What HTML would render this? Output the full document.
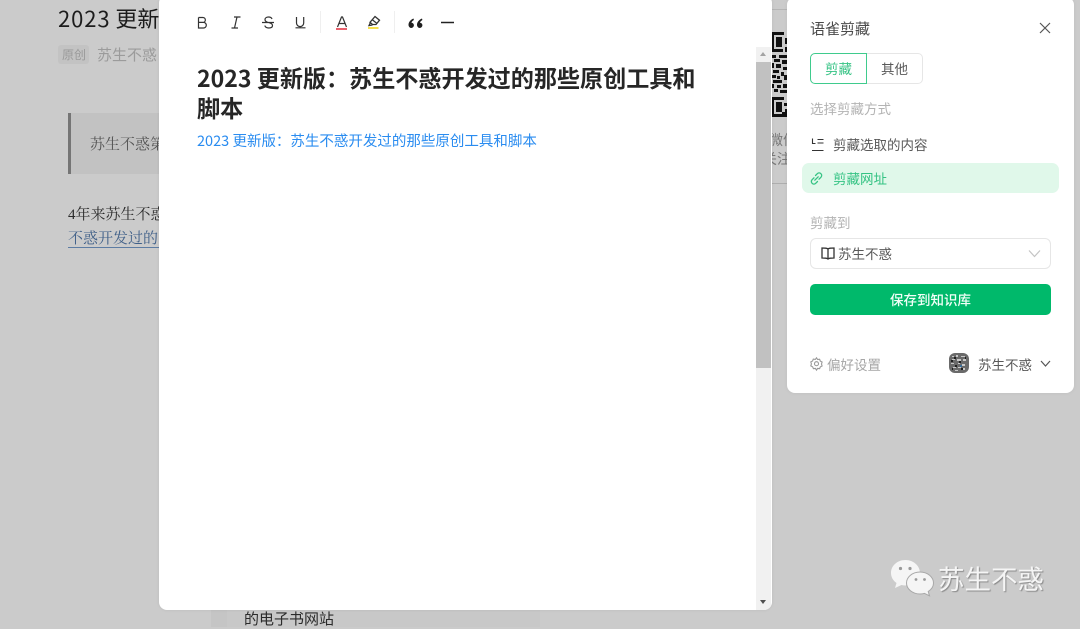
<!DOCTYPE html>
<html lang="zh-CN">
<head>
<meta charset="utf-8">
<title>语雀剪藏</title>
<style>
html,body{margin:0;padding:0}
body{width:1080px;height:627px;position:relative;overflow:hidden;background:#cbcbcb;font-family:"Noto Sans CJK SC","Liberation Sans",sans-serif}
.a{position:absolute;white-space:nowrap;line-height:1}
.s{font-family:"Liberation Serif","Noto Serif CJK SC",serif}
svg{position:absolute;overflow:visible}
</style>
</head>
<body>
<!-- background article -->
<div class="a" style="left:58px;top:6px;font-size:22px;line-height:24px;color:#1c1c1c"><span style="letter-spacing:.9px">2023</span> 更新</div>
<div class="a" style="left:58px;top:45px;width:31px;height:19px;background:#c3c3c3;border-radius:3px"></div>
<div class="a" style="left:62px;top:47px;font-size:12px;line-height:15px;color:#9a9a9a">原创</div>
<div class="a" style="left:97px;top:46px;font-size:15px;line-height:17px;color:#9b9b9b">苏生不惑</div>
<div class="a" style="left:68px;top:113px;width:100px;height:61px;background:#c2c2c2;border-left:3px solid #757575;box-sizing:border-box"></div>
<div class="a s" style="left:90px;top:136px;font-size:15px;line-height:18px;color:#555">苏生不惑第</div>
<div class="a s" style="left:68px;top:206px;font-size:15px;line-height:18px;color:#2b2b2b">4年来苏生不惑</div>
<div class="a s" style="left:68px;top:230px;width:100px;height:17px;overflow:hidden;font-size:15px;line-height:18px;color:#3f5f88;border-bottom:1px solid #5d7ca3">不惑开发过的</div>
<div class="a" style="left:211px;top:610px;width:16px;height:17px;background:#c5c5c5"></div>
<div class="a" style="left:227px;top:610px;width:313px;height:17px;background:#c8c8c8"></div>
<div class="a" style="left:244px;top:610px;font-size:15px;line-height:18px;color:#2b2b2b">的电子书网站</div>
<!-- right column behind -->
<div class="a" style="left:772px;top:9px;width:15px;height:1px;background:#b5b5b5"></div>
<div class="a" style="left:772px;top:183px;width:15px;height:1px;background:#aeaeae"></div>
<svg style="left:771px;top:32px" width="16" height="85" viewBox="0 0 16 85" fill="#111">
<path d="M0 0h13v3H0zM0 3h3v17H0zM0 17h12v3H0zM5 5h6v10H5zM14 6h2v6h-2zM14 15h2v5h-2z"/>
<path d="M0 23h5v3H0zM8 23h8v3H8zM3 27h6v3H3zM11 28h5v4h-5zM0 31h3v5H0zM5 32h5v4H5zM12 35h4v3h-4zM2 38h6v3H2zM10 40h3v4h-3zM0 43h5v3H0zM6 44h3v3H6zM13 43h3v5h-3zM2 48h9v3H2zM0 52h3v4H0zM6 53h4v3H6zM12 52h4v4h-4zM3 57h4v3H3zM9 58h7v3H9z"/>
<path d="M0 65h13v3H0zM0 68h3v17H0zM0 82h13v3H0zM5 70h6v10H5zM13 71h3v3h-3zM14 77h2v8h-2zM11 80h3v5h-3z"/>
</svg>
<div class="a" style="left:772px;top:131px;width:15px;height:40px;overflow:hidden;color:#777;font-size:14px">
  <span class="a" style="left:-3px;top:1px;line-height:16px">微信</span>
  <span class="a" style="left:-9px;top:20px;line-height:16px">关注</span>
</div>
<!-- watermark -->
<svg style="left:891px;top:560px" width="43" height="36" viewBox="0 0 43 36">
<path d="M14.500 0C6.500 0 0 5.500 0 13c0 4 2 7.500 5.500 10L4 28l6.500-3c1.300.3 2.700.5 4 .5 8 0 14.500-5.500 14.500-12.500S22.500 0 14.500 0z" fill="#f5f5f5"/>
<path d="M29 12c-7.500 0-13.500 5-13.500 11S21.500 34 29 34c1.500 0 3-.2 4.500-.6l5 2.400-1.300-4.300C40.300 29.500 42.500 26.500 42.500 23c0-6-6-11-13.500-11z" fill="#f5f5f5" stroke="#a8a8a8" stroke-width="1"/>
<circle cx="9.500" cy="8.500" r="1.600" fill="#999"/><circle cx="19" cy="8.500" r="1.600" fill="#999"/>
<circle cx="25" cy="19.500" r="1.400" fill="#999"/><circle cx="33.500" cy="19.500" r="1.400" fill="#999"/>
</svg>
<div class="a" style="left:938px;top:563px;font-size:26.500px;line-height:30px;color:#f5f5f5;text-shadow:1px 1px 1px #8a8a8a">苏生不惑</div>

<!-- editor modal -->
<div class="a" style="left:159px;top:-5px;width:613px;height:615px;background:#fff;border-radius:8px;overflow:hidden;box-shadow:0 0 3px rgba(0,0,0,.08)">
  <div class="a" style="left:597px;top:52px;width:15px;height:563px;background:#f1f1f1"></div>
  <div class="a" style="left:597px;top:67px;width:15px;height:306px;background:#c1c1c1"></div>
  <div class="a" style="left:601px;top:57px;width:0;height:0;border:3.500px solid transparent;border-bottom:4px solid #a3a3a3;border-top:0"></div>
  <div class="a" style="left:601px;top:605px;width:0;height:0;border:3.500px solid transparent;border-top:4px solid #505050;border-bottom:0"></div>
</div>
<!-- toolbar icons -->
<svg style="left:0;top:0" width="470" height="40" viewBox="0 0 470 40" fill="none" stroke="#333" stroke-width="1.200">
  <path d="M198.500 17.500v10.500h5a2.800 2.800 0 0 0 0-5.600h-5m0 0h4.400a2.450 2.450 0 0 0 0-4.900h-4.400"/>
  <path d="M234 17h6.500M231.500 28H238M237 17l-2.500 11"/>
  <path d="M262 22.500h12M272 19c-.5-1.500-2-2-3.500-2-2 0-3.500 1-3.500 2.700 0 3.800 7.500 2 7.500 5.800 0 1.700-1.700 2.500-3.700 2.500-2 0-3.500-.8-4-2.400"/>
  <path d="M296.500 17v6a3.600 3.600 0 0 0 7.200 0v-6M295.500 27.800h10"/>
  <path d="M337.500 27l4-10h1l4 10M339 23.500h6.200"/>
  <path d="M336 29h11" stroke="#e8606c" stroke-width="2"/>
  <path d="M375 16.500l4.500 3.700-3.500 4.300h-3.500l-2.500-2.200z M370.500 22.500l-1.500 3 3.500-.5 M372 19.500l5 4" stroke-width="1.300"/>
  <path d="M368 28h10.500" stroke="#f6df4c" stroke-width="2"/>
  <path d="M320.500 11v22M394.500 11v22" stroke="#efefef" stroke-width="1"/>
  <path d="M441 22.500h13" stroke="#222" stroke-width="1.500"/>
  <path stroke="none" fill="#1f1f1f" d="M413.500 18.500c-3 1.300-5 3.700-5 6.300 0 1.800 1.200 3.200 2.700 3.200s2.700-1.200 2.700-2.700-1.100-2.600-2.500-2.600c.3-1 1.200-2 2.500-2.700zM422 18.500c-3 1.300-5 3.700-5 6.300 0 1.800 1.200 3.200 2.700 3.200s2.700-1.200 2.700-2.700-1.100-2.600-2.500-2.600c.3-1 1.200-2 2.500-2.700z"/>
</svg>
<!-- editor content -->
<div class="a" style="left:197px;top:62px;width:510px;white-space:normal;font-size:23.100px;line-height:30px;font-weight:700;color:#262626">2023 更新版：苏生不惑开发过的那些原创工具和脚本</div>
<div class="a" style="left:197px;top:131px;font-size:14.500px;line-height:20px;color:#2a8cf0">2023 更新版：苏生不惑开发过的那些原创工具和脚本</div>

<!-- clip panel -->
<div class="a" style="left:787px;top:-3px;width:287px;height:396px;background:#fff;border-radius:8px;box-shadow:0 0 4px rgba(0,0,0,.06)"></div>
<div class="a" style="left:810px;top:20px;font-size:15px;line-height:18px;color:#4a4a4a">语雀剪藏</div>
<svg style="left:1039px;top:22px" width="12" height="12" viewBox="0 0 12 12" stroke="#555" stroke-width="1.200"><path d="M1 1l10 10M11 1L1 11"/></svg>
<div class="a" style="left:866px;top:53px;width:57px;height:31px;box-sizing:border-box;border:1px solid #e6e6e6;border-left:0;border-radius:0 5px 5px 0"></div>
<div class="a" style="left:810px;top:53px;width:57px;height:31px;box-sizing:border-box;border:1px solid #3fcb8d;border-radius:5px 0 0 5px"></div>
<div class="a" style="left:825px;top:60px;font-size:13.500px;line-height:17px;color:#35c384">剪藏</div>
<div class="a" style="left:881px;top:60px;font-size:13.500px;line-height:17px;color:#595959">其他</div>
<div class="a" style="left:810px;top:100px;font-size:13.500px;line-height:17px;color:#b3b3b3">选择剪藏方式</div>
<svg style="left:811px;top:137px" width="14" height="15" viewBox="0 0 14 15" fill="none" stroke="#333" stroke-width="1.100"><path d="M1.500 1.500v5h3M6.500 2.500h6M6.500 6h6M1 13.500h11.500"/></svg>
<div class="a" style="left:833px;top:136px;font-size:13.500px;line-height:17px;color:#595959">剪藏选取的内容</div>
<div class="a" style="left:802px;top:163px;width:257px;height:30px;background:#e0f8ea;border-radius:7px"></div>
<svg style="left:810px;top:172px" width="13" height="13" viewBox="0 0 13 13" fill="none" stroke="#35c384" stroke-width="1.300" stroke-linecap="round"><path d="M5.500 3.500l1.800-1.800a2.500 2.500 0 0 1 3.600 3.600L9 7.200M7.500 9.500l-1.800 1.800a2.500 2.500 0 0 1-3.600-3.600L4 5.800M4.800 8.200l3.400-3.400"/></svg>
<div class="a" style="left:833px;top:170px;font-size:13.500px;line-height:17px;color:#35c384">剪藏网址</div>
<div class="a" style="left:810px;top:214px;font-size:13.500px;line-height:17px;color:#b3b3b3">剪藏到</div>
<div class="a" style="left:810px;top:238px;width:241px;height:31px;box-sizing:border-box;border:1px solid #e6e6e6;border-radius:6px"></div>
<svg style="left:821px;top:247px" width="14" height="13" viewBox="0 0 14 13" fill="none" stroke="#333" stroke-width="1.300"><path d="M7 2C6 1 4.500 1 1 1v10c3.500 0 5 0 6 1 1-1 2.500-1 6-1V1C9.500 1 8 1 7 2zM7 2v10"/></svg>
<div class="a" style="left:838px;top:245px;font-size:13.500px;line-height:17px;color:#595959">苏生不惑</div>
<svg style="left:1028px;top:249px" width="13" height="9" viewBox="0 0 13 9" fill="none" stroke="#c4c4c4" stroke-width="1.200"><path d="M1 1.500l5.500 6 5.500-6"/></svg>
<div class="a" style="left:810px;top:284px;width:241px;height:31px;background:#00b96b;border-radius:5px"></div>
<div class="a" style="left:810px;top:291px;width:241px;text-align:center;font-size:13.500px;line-height:17px;font-weight:500;color:#f2fff8">保存到知识库</div>
<svg style="left:810px;top:357px" width="13" height="13" viewBox="0 0 13 13" fill="none" stroke="#999" stroke-width="1.100"><path d="M6.500 .8l1.100 1.700 2-.3.700 1.900 1.800.9-.6 2 .6 2-1.800.9-.7 1.800-2-.3-1.100 1.700-1.100-1.700-2 .3-.7-1.800L.8 8.900l.6-2-.6-2 1.800-.9.700-1.900 2 .3z"/><circle cx="6.500" cy="6.700" r="2"/></svg>
<div class="a" style="left:827px;top:356px;font-size:13.500px;line-height:17px;color:#a6a6a6">偏好设置</div>
<svg style="left:949px;top:353px" width="20" height="20" viewBox="0 0 20 20">
<rect width="20" height="20" rx="6" fill="#6a6a6a"/>
<path d="M3 3h2v1H3zM7 2h2v2H7zM12 3h4v1h-4zM3 6h3v1H3zM8 6h4v2H8zM14 6h3v2h-3zM2 10h3v1H2zM9 10h2v1H9zM13 11h3v2h-3zM4 14h3v1H4zM9 14h3v1H9zM14 15h2v2h-2zM6 17h3v1H6z" fill="#c8c8c8"/>
<path d="M5 4h2v2H5zM10 8h2v2h-2zM6 12h2v2H6zM16 4h1v2h-1zM2 7h2v2H2zM12 15h2v2h-2zM3 15h1v2H3z" fill="#1f1f1f"/>
<rect x="11" y="12" width="2" height="2" fill="#3a6d99"/>
</svg>
<div class="a" style="left:978px;top:356px;font-size:13.500px;line-height:17px;color:#595959">苏生不惑</div>
<svg style="left:1040px;top:360px" width="11" height="8" viewBox="0 0 11 8" fill="none" stroke="#555" stroke-width="1.200"><path d="M1 1l4.500 5L10 1"/></svg>
</body>
</html>
